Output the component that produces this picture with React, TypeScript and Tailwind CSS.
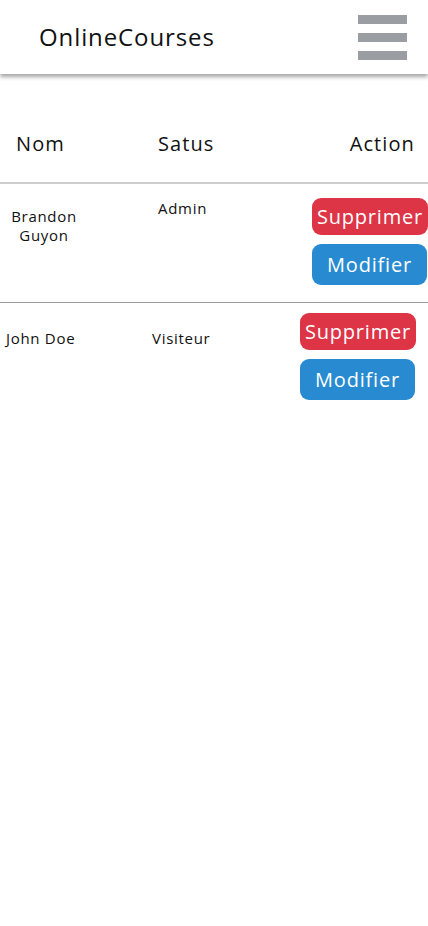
import React from 'react';

type User = {
  name: string;
  status: string;
};

const users: User[] = [
  { name: 'Brandon Guyon', status: 'Admin' },
  { name: 'John Doe', status: 'Visiteur' },
];

function Header() {
  return (
    <header className="h-[74px] flex items-center justify-between pl-[39px] pr-[21px] bg-white shadow-[0_3px_4px_rgba(0,0,0,0.35)] relative z-10">
      <h1 className="text-[24px] leading-none text-[#111] tracking-[0.9px]">OnlineCourses</h1>
      <button className="flex flex-col gap-[9px]" aria-label="menu">
        <span className="block w-[49px] h-[9px] bg-[#9a9da1]" />
        <span className="block w-[49px] h-[9px] bg-[#9a9da1]" />
        <span className="block w-[49px] h-[9px] bg-[#9a9da1]" />
      </button>
    </header>
  );
}

function ActionButtons() {
  return (
    <div className="flex flex-col gap-[9px] tracking-[0.8px]">
      <button className="w-[116px] h-[37px] rounded-[9px] bg-[#dd3546] text-white text-[20px] leading-none">
        Supprimer
      </button>
      <button className="w-[115px] h-[41px] rounded-[9px] bg-[#288bd1] text-white text-[20px] leading-none">
        Modifier
      </button>
    </div>
  );
}

export default function App() {
  return (
    <div className="min-h-[926px] bg-white text-[#111]" style={{ fontFamily: '"Open Sans", "Liberation Sans", sans-serif' }}>
      <Header />

      <div className="mt-[56px]">
        {/* table head */}
        <div className="flex items-center text-[20px] leading-[28px] pb-[24px] tracking-[1.1px]">
          <span className="pl-[16px] w-[158px]">Nom</span>
          <span>Satus</span>
          <span className="ml-auto pr-[13px]">Action</span>
        </div>
        <div className="h-[2px] bg-[#cdcdcd]" />

        {/* row 1 */}
        <div className="flex items-start text-[15px] leading-[19px] pb-[17px] tracking-[0.7px]">
          <span className="w-[88px] text-center pt-[23px]">
            Brandon
            <br />
            Guyon
          </span>
          <span className="pl-[70px] pt-[15px]">{users[0].status}</span>
          <div className="ml-auto pt-[14px]">
            <ActionButtons />
          </div>
        </div>
        <div className="h-px bg-[#999]" />

        {/* row 2 */}
        <div className="flex items-start text-[15px] leading-[19px] tracking-[0.7px]">
          <span className="pl-[6px] w-[152px] pt-[26px]">{users[1].name}</span>
          <span className="pt-[26px]">{users[1].status}</span>
          <div className="ml-auto pr-[12px] pt-[10px]">
            <ActionButtons />
          </div>
        </div>
      </div>
    </div>
  );
}
